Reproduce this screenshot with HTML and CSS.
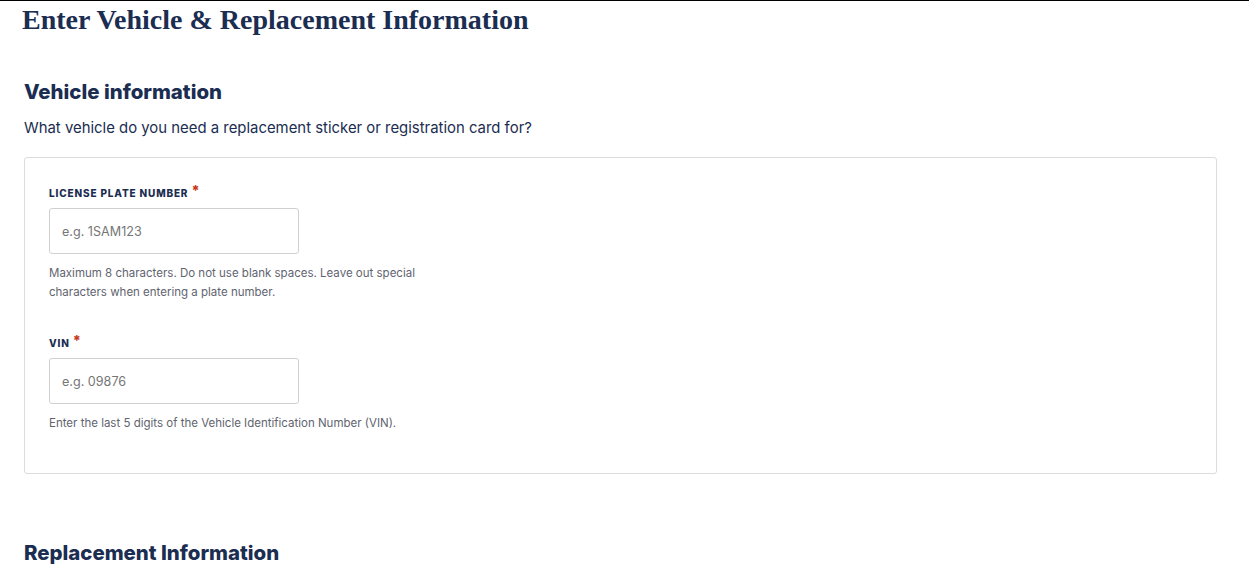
FILE: index.html
```html
<!DOCTYPE html>
<html lang="en">
<head>
<meta charset="utf-8">
<title>Enter Vehicle &amp; Replacement Information</title>
<link rel="stylesheet" href="styles.css">
</head>
<body>
<div class="topline"></div>
<h1 class="page-title">Enter Vehicle &amp; Replacement Information</h1>
<main class="content">
  <section class="section">
    <h2 class="section-title">Vehicle information</h2>
    <p class="section-desc">What vehicle do you need a replacement sticker or registration card for?</p>
    <div class="card">
      <div class="field">
        <label class="field-label" for="plate">License plate number <span class="req">*</span></label>
        <input class="field-input" id="plate" type="text" placeholder="e.g. 1SAM123">
        <p class="field-help">Maximum 8 characters. Do not use blank spaces. Leave out special characters when entering a plate number.</p>
      </div>
      <div class="field">
        <label class="field-label" for="vin">VIN <span class="req">*</span></label>
        <input class="field-input" id="vin" type="text" placeholder="e.g. 09876">
        <p class="field-help">Enter the last 5 digits of the Vehicle Identification Number (VIN).</p>
      </div>
    </div>
  </section>
  <section class="section section-next">
    <h2 class="section-title">Replacement Information</h2>
  </section>
</main>
</body>
</html>
```

FILE: styles.css
```css
html, body {
  margin: 0;
  padding: 0;
  background: #fff;
}
body {
  color: #1b2d51;
  font-family: Inter, "Liberation Sans", Arial, sans-serif;
}
.topline {
  height: 1px;
  background: #000;
}
.page-title {
  margin: 0;
  padding: 3px 0 0 22px;
  font-family: "Liberation Serif", "Times New Roman", serif;
  font-size: 28px;
  line-height: 32px;
  font-weight: bold;
  color: #1b2d51;
}
.content {
  padding: 0 32px 0 24px;
}
.section-title {
  margin: 44px 0 0;
  font-size: 20.4px;
  line-height: 24px;
  font-weight: 800;
  color: #1b2d51;
}
.section-desc {
  margin: 14px 0 0;
  font-size: 14.9px;
  line-height: 20px;
  color: #1b2d51;
}
.card {
  margin-top: 19px;
  border: 1px solid #dcdcdc;
  border-radius: 3px;
  padding: 28px 24px 40px;
  display: flex;
  flex-direction: column;
  gap: 34px;
}
.field {
  display: flex;
  flex-direction: column;
  align-items: flex-start;
}
.field-label {
  font-size: 10px;
  line-height: 14px;
  font-weight: 800;
  letter-spacing: 0.85px;
  text-transform: uppercase;
  color: #1b2d51;
}
.req {
  color: #c8381b;
  font-size: 14px;
  vertical-align: top;
  line-height: 10px;
  letter-spacing: 0;
}
.field-input {
  box-sizing: border-box;
  margin-top: 8px;
  width: 250px;
  height: 46px;
  border: 1px solid #d0d0d0;
  border-radius: 3px;
  padding: 0 12px;
  font-family: Inter, "Liberation Sans", Arial, sans-serif;
  font-size: 12.6px;
  color: #333;
  background: #fff;
}
.field-input::placeholder {
  color: #767676;
}
.field-help {
  margin: 10px 0 0;
  max-width: 380px;
  font-size: 11.5px;
  line-height: 19px;
  color: #5f6470;
}
.section-next .section-title {
  margin-top: 67px;
}
```
